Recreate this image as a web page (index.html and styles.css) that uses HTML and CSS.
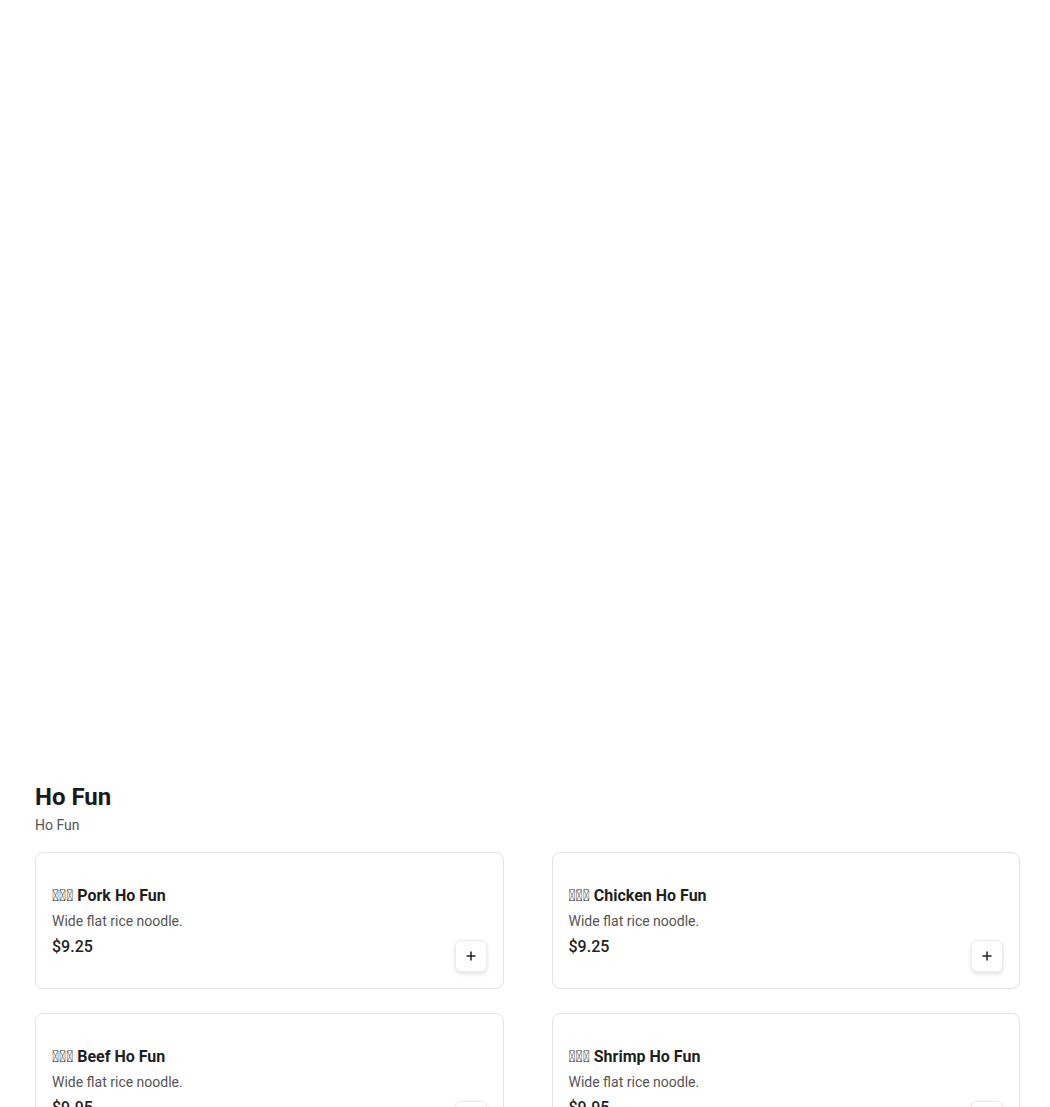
FILE: index.html
```html
<!DOCTYPE html>
<html lang="en">
  <head>
    <meta charset="UTF-8" />
    <meta name="viewport" content="width=device-width, initial-scale=1.0" />
    <title>Ho Fun</title>
    <link rel="stylesheet" href="styles.css">
  </head>
  <body>
    <div class="menu">
      <section class="category">
        <h2 class="category-title">Ho Fun</h2>
        <p class="category-sub">Ho Fun</p>

        <div class="items">
          <div class="item">
            <div class="item-info">
              <h3 class="item-name">&#xE001;&#xE002;&#xE003; Pork Ho Fun</h3>
              <p class="item-desc">Wide flat rice noodle.</p>
              <p class="item-price">$9.25</p>
            </div>
            <button class="add-btn" aria-label="Add">
              <svg width="12" height="12" viewBox="0 0 12 12"><path d="M6 1.5v9M1.5 6h9" stroke="#222" stroke-width="1.5" fill="none"/></svg>
            </button>
          </div>

          <div class="item">
            <div class="item-info">
              <h3 class="item-name">&#xE004;&#xE002;&#xE003; Chicken Ho Fun</h3>
              <p class="item-desc">Wide flat rice noodle.</p>
              <p class="item-price">$9.25</p>
            </div>
            <button class="add-btn" aria-label="Add">
              <svg width="12" height="12" viewBox="0 0 12 12"><path d="M6 1.5v9M1.5 6h9" stroke="#222" stroke-width="1.5" fill="none"/></svg>
            </button>
          </div>

          <div class="item">
            <div class="item-info">
              <h3 class="item-name">&#xE005;&#xE002;&#xE003; Beef Ho Fun</h3>
              <p class="item-desc">Wide flat rice noodle.</p>
              <p class="item-price">$9.95</p>
            </div>
            <button class="add-btn" aria-label="Add">
              <svg width="12" height="12" viewBox="0 0 12 12"><path d="M6 1.5v9M1.5 6h9" stroke="#222" stroke-width="1.5" fill="none"/></svg>
            </button>
          </div>

          <div class="item">
            <div class="item-info">
              <h3 class="item-name">&#xE006;&#xE002;&#xE003; Shrimp Ho Fun</h3>
              <p class="item-desc">Wide flat rice noodle.</p>
              <p class="item-price">$9.95</p>
            </div>
            <button class="add-btn" aria-label="Add">
              <svg width="12" height="12" viewBox="0 0 12 12"><path d="M6 1.5v9M1.5 6h9" stroke="#222" stroke-width="1.5" fill="none"/></svg>
            </button>
          </div>
        </div>
      </section>
    </div>
  </body>
</html>
```

FILE: styles.css
```css
* {
  margin: 0;
  padding: 0;
  box-sizing: border-box;
}

body {
  font-family: Roboto, "Liberation Sans", sans-serif;
  color: #1f1f1f;
  background: white;
}

.menu {
  padding: 781px 30px 0 35px;
}

.category-title {
  font-size: 24px;
  line-height: 32px;
  font-weight: 700;
  color: #1a1a1a;
}

.category-sub {
  margin-top: 2px;
  font-size: 14px;
  line-height: 20px;
  color: #555;
}

.items {
  margin-top: 17px;
  display: grid;
  grid-template-columns: 1fr 1fr;
  column-gap: 48px;
  row-gap: 24px;
}

.item {
  display: flex;
  align-items: center;
  min-height: 137px;
  padding: 16px;
  border: 1px solid #e3e3e3;
  border-radius: 8px;
  background: white;
}

.item-info {
  flex: 1;
  padding-top: 1px;
}

.item-name {
  font-size: 16px;
  line-height: 24px;
  font-weight: 700;
  color: #1f1f1f;
}

.item-desc {
  margin-top: 3px;
  font-size: 14px;
  line-height: 20px;
  color: #555;
}

.item-price {
  margin-top: 4px;
  font-size: 16px;
  line-height: 24px;
  font-weight: 500;
  color: #1f1f1f;
}

.add-btn {
  align-self: flex-end;
  width: 32px;
  height: 32px;
  display: flex;
  align-items: center;
  justify-content: center;
  border: 1px solid #ececec;
  border-radius: 6px;
  background: white;
  box-shadow: 0 2px 4px rgba(0, 0, 0, 0.12);
  cursor: pointer;
}
```
